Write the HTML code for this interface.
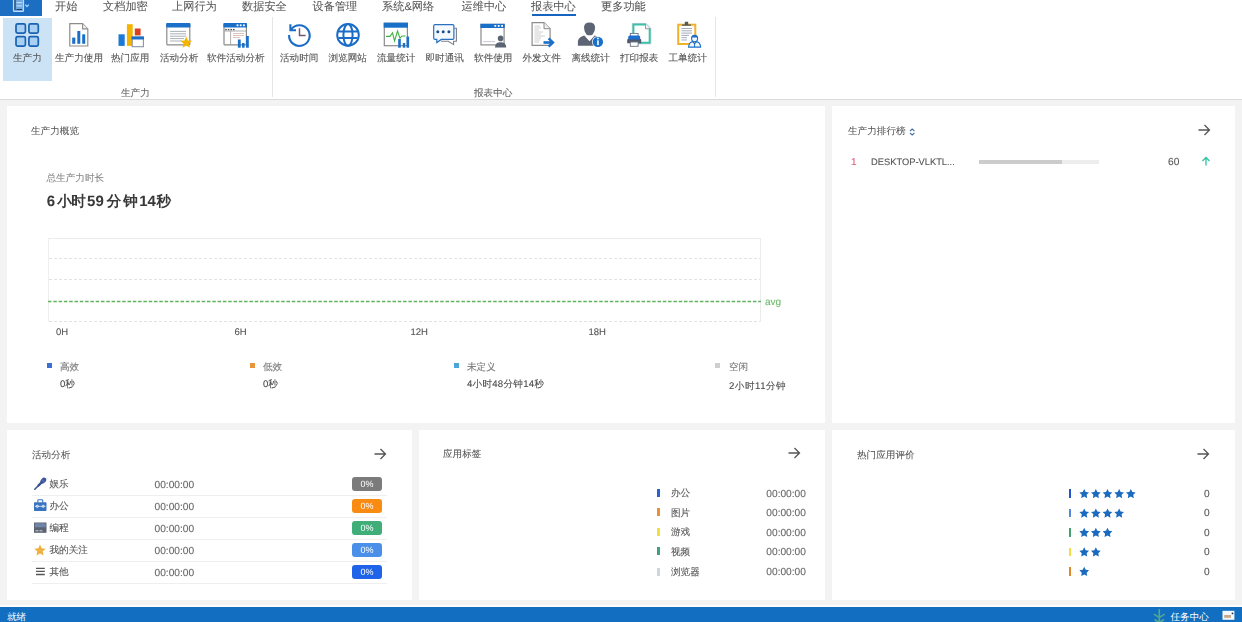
<!DOCTYPE html>
<html><head><meta charset="utf-8">
<style>
*{margin:0;padding:0;box-sizing:border-box}
html,body{width:1242px;height:622px;overflow:hidden;background:#fff;font-family:"Liberation Sans",sans-serif;color:#444;text-rendering:geometricPrecision}
.a{position:absolute;white-space:nowrap;line-height:1;-webkit-text-stroke:0.1px currentColor}
svg{position:absolute;overflow:visible}
</style></head><body>
<div style="position:absolute;left:0;top:0;width:1242px;height:622px;filter:blur(0.3px)">
<div class="a" style="left:0px;top:0px;width:42px;height:16px;background:#1b6ec2;"></div>
<svg style="left:12px;top:0" width="20" height="14" viewBox="0 0 20 14">
    <rect x="1.5" y="-1" width="10" height="12.5" rx="1" fill="#6fa6dc" stroke="#b8dcff" stroke-width="1.2"/>
    <rect x="2.4" y="0" width="1.2" height="10" fill="#1a3f6a"/>
    <rect x="4.5" y="2.2" width="5.5" height="1" fill="#cfe6ff"/>
    <rect x="4.5" y="5.4" width="5.5" height="1" fill="#cfe6ff"/>
    <rect x="4.5" y="9" width="5.5" height="1" fill="#1a3f6a"/>
    <path d="M13.3 4.6 L15 6.6 L16.8 4.6" fill="none" stroke="#a8d4ff" stroke-width="1.3"/>
</svg>
<div class="a" style="left:55px;top:2.0px;font-size:11.2px;color:#555;-webkit-text-stroke:0.05px currentColor">开始</div>
<div class="a" style="left:103px;top:2.0px;font-size:11.2px;color:#555;-webkit-text-stroke:0.05px currentColor">文档加密</div>
<div class="a" style="left:172px;top:2.0px;font-size:11.2px;color:#555;-webkit-text-stroke:0.05px currentColor">上网行为</div>
<div class="a" style="left:242px;top:2.0px;font-size:11.2px;color:#555;-webkit-text-stroke:0.05px currentColor">数据安全</div>
<div class="a" style="left:312.5px;top:2.0px;font-size:11.2px;color:#555;-webkit-text-stroke:0.05px currentColor">设备管理</div>
<div class="a" style="left:382px;top:2.0px;font-size:11.2px;color:#555;-webkit-text-stroke:0.05px currentColor">系统&amp;网络</div>
<div class="a" style="left:461.5px;top:2.0px;font-size:11.2px;color:#555;-webkit-text-stroke:0.05px currentColor">运维中心</div>
<div class="a" style="left:531px;top:2.0px;font-size:11.2px;color:#555;-webkit-text-stroke:0.05px currentColor">报表中心</div>
<div class="a" style="left:601px;top:2.0px;font-size:11.2px;color:#555;-webkit-text-stroke:0.05px currentColor">更多功能</div>
<div class="a" style="left:532px;top:14px;width:44px;height:2px;background:#1565c0;"></div>
<div class="a" style="left:3px;top:18px;width:49px;height:63px;background:#cce3f6;"></div>
  <svg style="left:0;top:0" width="1242" height="100" viewBox="0 0 1242 100">
    <!-- grid -->
    <g fill="#a9cff2" stroke="#1762b2" stroke-width="1.7">
      <rect x="16" y="23.8" width="9.4" height="9.4" rx="1.6"/>
      <rect x="28.9" y="23.8" width="9.4" height="9.4" rx="1.6"/>
      <rect x="16" y="36.7" width="9.4" height="9.4" rx="1.6"/>
      <rect x="28.9" y="36.7" width="9.4" height="9.4" rx="1.6"/>
    </g>
    <!-- doc chart -->
    <path d="M69.8 23.7 H82.6 L87.8 28.9 V46 H69.8 Z" fill="#fff" stroke="#8c8c8c" stroke-width="1.2"/>
    <path d="M82.6 23.7 V28.9 H87.8" fill="#f2f2f2" stroke="#8c8c8c" stroke-width="1.1"/>
    <g fill="#1b6fc9">
      <rect x="72.2" y="37.6" width="3.1" height="6.2"/>
      <rect x="77.3" y="31" width="3" height="12.8"/>
      <rect x="82.2" y="34.3" width="3" height="9.5"/>
    </g>
    <!-- hot apps -->
    <rect x="118.5" y="34.3" width="6.2" height="11.6" fill="#1c7ad6"/>
    <rect x="126.9" y="24.2" width="5.8" height="21.7" fill="#f4b400"/>
    <rect x="134.8" y="28.5" width="5.8" height="6.9" fill="#d9411e"/>
    <rect x="132.2" y="37.1" width="11.2" height="9.6" fill="#fff" stroke="#8a94a6" stroke-width="1.1"/>
    <rect x="131.6" y="36.5" width="12.3" height="3" fill="#1a6fc8"/>
    <!-- activity analysis -->
    <rect x="166.8" y="23.7" width="23" height="21.2" rx="1" fill="#fff" stroke="#8a8a8a" stroke-width="1.2"/>
    <rect x="166.2" y="23.1" width="24.2" height="4.4" rx="0.8" fill="#1a6fc8"/>
    <g stroke="#a0a6b0" stroke-width="0.9">
      <path d="M170 31.4 H186 M170 33.8 H186 M170 36.2 H186 M170 38.6 H184 M170 41 H182"/>
    </g>
    <path d="M186.20 36.60 L187.89 40.38 L192.00 40.81 L188.93 43.59 L189.79 47.64 L186.20 45.57 L182.61 47.64 L183.47 43.59 L180.40 40.81 L184.51 40.38 Z" fill="#f5b400"/>
    <!-- software activity analysis -->
    <rect x="224" y="23.7" width="22.4" height="21.2" rx="1" fill="#fff" stroke="#8a8a8a" stroke-width="1.2"/>
    <rect x="223.4" y="23.1" width="23.6" height="4.4" rx="0.8" fill="#1a6fc8"/>
    <g fill="#fff"><rect x="236.6" y="24.4" width="1.8" height="1.8"/><rect x="239.8" y="24.4" width="1.8" height="1.8"/><rect x="243" y="24.4" width="1.8" height="1.8"/></g>
    <g fill="#555"><circle cx="226" cy="29.6" r="0.9"/><circle cx="228.6" cy="29.6" r="0.9"/><circle cx="231.2" cy="29.6" r="0.9"/><circle cx="233.8" cy="29.6" r="0.9"/></g>
    <path d="M224 31 H246.4 M230.6 31 V45" stroke="#9a9a9a" stroke-width="0.8"/>
    <path d="M233 33.5 H244 M233 35.5 H244 M233 37.5 H240" stroke="#d8b8a8" stroke-width="0.8"/>
    <g fill="#1a6fc8">
      <rect x="237.9" y="39.5" width="2.8" height="8.2"/>
      <rect x="242" y="43" width="2.6" height="4.7"/>
      <rect x="246" y="36" width="2.8" height="11.7"/>
    </g>
    <!-- history -->
    <path d="M289.1 35 A10.3 10.3 0 1 0 291 29.6" fill="none" stroke="#1a6cc6" stroke-width="2.1"/>
    <path d="M290.4 24.2 V30.3 H296" fill="none" stroke="#1a6cc6" stroke-width="2.1"/>
    <path d="M299.5 28.2 V35.5 H305.6" fill="none" stroke="#6e5a72" stroke-width="1.5"/>
    <!-- globe -->
    <g fill="none" stroke="#1a6cc6" stroke-width="2">
      <circle cx="348" cy="34.9" r="10.8"/>
      <ellipse cx="348" cy="34.9" rx="4.6" ry="10.8"/>
      <path d="M338.5 31.4 H357.5 M338.5 38 H357.5"/>
    </g>
    <!-- traffic -->
    <rect x="384.3" y="23.3" width="23.1" height="22.4" fill="#fff" stroke="#8a8a8a" stroke-width="1.2"/>
    <rect x="383.7" y="22.7" width="24.3" height="5" fill="#1a6fc8"/>
    <path d="M386 36.4 H390 L392.5 32.8 L394.6 41 L397.5 31 L400 38.2 L402 36 H405.5" fill="none" stroke="#3fb03f" stroke-width="1.1"/>
    <g fill="#1a6fc8">
      <rect x="398.2" y="39" width="2.6" height="8.7"/>
      <rect x="402.8" y="43" width="2.4" height="4.7"/>
      <rect x="406.5" y="36.5" width="2.6" height="11.2"/>
    </g>
    <!-- chat -->
    <path d="M454.2 28.3 H456.4 V41.3 H453.6 V44.6 L448.2 41.3 H441" fill="none" stroke="#7a7f88" stroke-width="1.1"/>
    <path d="M435 24.6 H452.6 Q453.9 24.6 453.9 25.9 V38.1 Q453.9 39.4 452.6 39.4 H441.3 L436.8 42.6 V39.4 H435 Q433.7 39.4 433.7 38.1 V25.9 Q433.7 24.6 435 24.6 Z" fill="#f4f9fe" stroke="#2a6fc0" stroke-width="1.2"/>
    <g fill="#1f4f8a"><circle cx="437.8" cy="31.8" r="1.5"/><circle cx="443.2" cy="31.8" r="1.5"/><circle cx="448.9" cy="31.8" r="1.5"/></g>
    <!-- software use -->
    <rect x="481" y="24.4" width="23.1" height="20.5" fill="#fff" stroke="#8a8a8a" stroke-width="1.2"/>
    <rect x="480.4" y="23.8" width="24.3" height="4.2" fill="#1a6fc8"/>
    <g fill="#fff"><rect x="494.4" y="25" width="1.8" height="1.8"/><rect x="497.8" y="25" width="1.8" height="1.8"/><rect x="501.2" y="25" width="1.8" height="1.8"/></g>
    <path d="M483 41.6 H495" stroke="#b8bcc4" stroke-width="0.8"/>
    <circle cx="500.6" cy="38.4" r="2.8" fill="#5b6473"/>
    <path d="M495 47.6 Q495 42.2 500.6 42.2 Q506.2 42.2 506.2 47.6 Z" fill="#5b6473"/>
    <!-- outgoing file -->
    <path d="M532.1 22.6 H544 L550.1 28.7 V45.3 H532.1 Z" fill="#fff" stroke="#8c8c8c" stroke-width="1.2"/>
    <path d="M544 22.6 V28.7 H550.1" fill="#eee" stroke="#8c8c8c" stroke-width="1"/>
    <path d="M534.5 26 H540 M534.5 28 H541 M534.5 30 H539 M534.5 32 H543 M534.5 34 H541 M534.5 36 H545 M534.5 38 H541 M534.5 40 H540 M534.5 42 H539" stroke="#c8c8cc" stroke-width="0.9"/>
    <path d="M543.5 42.5 H552" stroke="#1a6fc8" stroke-width="2.6"/>
    <path d="M548.6 38.3 L553 42.5 L548.6 46.7" fill="none" stroke="#1a6fc8" stroke-width="2.4"/>
    <!-- offline -->
    <path d="M584 27.6 Q584 22.4 589.5 22.4 Q595.1 22.4 595.1 27.6 Q595.1 32 592.6 34.4 Q591.2 35.3 589.5 35.3 Q587.8 35.3 586.4 34.4 Q584 32 584 27.6 Z" fill="#5d6575"/>
    <path d="M577.9 45.8 V41.2 Q578.3 37.2 584.3 35.4 L589.5 41.2 L594.7 35.4 Q600.6 37.2 601 41.2 V45.8 Z" fill="#5d6575"/>
    <circle cx="597.9" cy="41.9" r="5.9" fill="#fff"/>
    <circle cx="597.9" cy="41.9" r="5.2" fill="#1a6fc8"/>
    <rect x="597.1" y="40.3" width="1.7" height="4.8" fill="#e8f6ff"/>
    <circle cx="597.95" cy="38.5" r="0.95" fill="#e8f6ff"/>
    <!-- print report -->
    <path d="M632.3 23.5 H646 L650.8 28.3 V43.9 H632.3 Z" fill="#f4fffc" stroke="#d8c0e0" stroke-width="0.8"/>
    <path d="M633.4 24.6 H645.5 L649.7 28.8 V42.8 H633.4 Z" fill="#fff" stroke="#3cc0a6" stroke-width="2"/>
    <path d="M645.5 23.6 V28.8 H650.6" fill="#f0f0f4" stroke="#8a90a0" stroke-width="0.9"/>
    <rect x="630.3" y="33.4" width="7.8" height="3" fill="#fff" stroke="#6a7282" stroke-width="0.9"/>
    <path d="M627.2 40 Q627.2 38.4 628.8 38.4 H639.6 Q641.2 38.4 641.2 40 V43.2 H627.2 Z" fill="#50586a"/>
    <rect x="628.2" y="35.6" width="12" height="3.9" rx="1.6" fill="#1a6fd0"/>
    <rect x="630.3" y="42" width="7.8" height="4.3" fill="#fff" stroke="#6a7282" stroke-width="0.9"/>
    <!-- work order -->
    <rect x="678.2" y="24.7" width="17.1" height="19.3" fill="#fff" stroke="#f2b12a" stroke-width="2"/>
    <path d="M682 25.8 H691 V24.4 H688.2 V21.8 H684.8 V24.4 H682 Z" fill="#505860"/>
    <path d="M681.4 28.5 H692 M681.4 30.8 H692 M681.4 33.1 H692 M681.4 35.4 H689 M681.4 37.7 H687 M681.4 40 H687" stroke="#9aa2b2" stroke-width="0.9"/>
    <path d="M688.6 47 Q688.6 42.2 692.3 41.8 M697.1 41.8 Q700.6 42.2 700.6 47 Z" fill="#fff"/>
    <path d="M688.6 47.1 Q688.8 42.3 692.6 41.6 L694.6 43.8 L696.6 41.6 Q700.4 42.3 700.6 47.1 Z" fill="#eef6ff" stroke="#1a6fc8" stroke-width="1.1"/>
    <ellipse cx="694.6" cy="38.6" rx="3" ry="3.2" fill="#eef6ff" stroke="#1a6fc8" stroke-width="1.1"/>
    <path d="M691.6 37.6 Q692 35.2 694.6 35.2 Q697.2 35.2 697.6 37.6 Z" fill="#1a6fc8"/>
    <path d="M694.6 43.8 V47" stroke="#1a6fc8" stroke-width="1"/>
  </svg>
<div class="a" style="left:272px;top:17px;width:1px;height:80px;background:#e6e6e6;"></div>
<div class="a" style="left:715px;top:17px;width:1px;height:80px;background:#e6e6e6;"></div>
<div class="a" style="left:0px;top:99px;width:1242px;height:1px;background:#dadada;"></div>
<div class="a" style="left:13px;top:53.5px;font-size:9.6px;color:#555;">生产力</div>
<div class="a" style="left:55px;top:53.5px;font-size:9.6px;color:#555;">生产力使用</div>
<div class="a" style="left:111px;top:53.5px;font-size:9.6px;color:#555;">热门应用</div>
<div class="a" style="left:160px;top:53.5px;font-size:9.6px;color:#555;">活动分析</div>
<div class="a" style="left:207px;top:53.5px;font-size:9.6px;color:#555;">软件活动分析</div>
<div class="a" style="left:280px;top:53.5px;font-size:9.6px;color:#555;">活动时间</div>
<div class="a" style="left:328.5px;top:53.5px;font-size:9.6px;color:#555;">浏览网站</div>
<div class="a" style="left:377px;top:53.5px;font-size:9.6px;color:#555;">流量统计</div>
<div class="a" style="left:425.5px;top:53.5px;font-size:9.6px;color:#555;">即时通讯</div>
<div class="a" style="left:474px;top:53.5px;font-size:9.6px;color:#555;">软件使用</div>
<div class="a" style="left:522.5px;top:53.5px;font-size:9.6px;color:#555;">外发文件</div>
<div class="a" style="left:571.5px;top:53.5px;font-size:9.6px;color:#555;">离线统计</div>
<div class="a" style="left:620px;top:53.5px;font-size:9.6px;color:#555;">打印报表</div>
<div class="a" style="left:668.5px;top:53.5px;font-size:9.6px;color:#555;">工单统计</div>
<div class="a" style="left:121px;top:88.5px;font-size:9.6px;color:#666;">生产力</div>
<div class="a" style="left:474px;top:88.5px;font-size:9.6px;color:#666;">报表中心</div>
<div class="a" style="left:0px;top:100px;width:1242px;height:506px;background:#f3f3f3;"></div>
<div class="a" style="left:7px;top:106px;width:818px;height:317px;background:#fff;"></div>
<div class="a" style="left:832px;top:106px;width:403px;height:317px;background:#fff;"></div>
<div class="a" style="left:7px;top:430px;width:405px;height:170px;background:#fff;"></div>
<div class="a" style="left:419px;top:430px;width:406px;height:170px;background:#fff;"></div>
<div class="a" style="left:832px;top:430px;width:403px;height:170px;background:#fff;"></div>
<div class="a" style="left:31px;top:127px;font-size:9.6px;color:#505050;-webkit-text-stroke:0.04px currentColor">生产力概览</div>
<div class="a" style="left:46.5px;top:174px;font-size:9.6px;color:#888;">总生产力时长</div>
<div class="a" style="left:46.7px;top:194.3px;font-size:15px;color:#383838;font-weight:bold;-webkit-text-stroke:0">6</div>
<div class="a" style="left:57.3px;top:194.8px;font-size:14.5px;color:#383838;font-weight:bold;-webkit-text-stroke:0">小</div>
<div class="a" style="left:71.2px;top:194.8px;font-size:14.5px;color:#383838;font-weight:bold;-webkit-text-stroke:0">时</div>
<div class="a" style="left:87.1px;top:194.3px;font-size:15px;color:#383838;font-weight:bold;-webkit-text-stroke:0">59</div>
<div class="a" style="left:106.7px;top:194.8px;font-size:14.5px;color:#383838;font-weight:bold;-webkit-text-stroke:0">分</div>
<div class="a" style="left:123.2px;top:194.8px;font-size:14.5px;color:#383838;font-weight:bold;-webkit-text-stroke:0">钟</div>
<div class="a" style="left:139.2px;top:194.3px;font-size:15px;color:#383838;font-weight:bold;-webkit-text-stroke:0">14</div>
<div class="a" style="left:156.6px;top:194.8px;font-size:14.5px;color:#383838;font-weight:bold;-webkit-text-stroke:0">秒</div>
<div class="a" style="left:48px;top:238px;width:713px;height:1px;background:#ececec;"></div>
<div class="a" style="left:48px;top:238px;width:1px;height:84px;background:#efefef;"></div>
<div class="a" style="left:760px;top:238px;width:1px;height:84px;background:#ececec;"></div>
<svg style="left:0;top:0" width="1242" height="622">
<path d="M49 258.5 H760 M49 279.5 H760 M49 321.5 H760" stroke="#e2e2e2" stroke-width="1" stroke-dasharray="3 2"/>
<line x1="48" y1="301.5" x2="761" y2="301.5" stroke="#5fb35f" stroke-width="1.3" stroke-dasharray="3.5 1.8"/>
</svg>
<div class="a" style="left:765px;top:297.5px;font-size:10px;color:#6cbb6c;">avg</div>
<div class="a" style="left:56px;top:328px;font-size:9.5px;color:#555;">0H</div>
<div class="a" style="left:234.5px;top:328px;font-size:9.5px;color:#555;">6H</div>
<div class="a" style="left:410.5px;top:328px;font-size:9.5px;color:#555;">12H</div>
<div class="a" style="left:588.5px;top:328px;font-size:9.5px;color:#555;">18H</div>
<div class="a" style="left:47px;top:363px;width:5px;height:5px;background:#3b6fd6;"></div>
<div class="a" style="left:60px;top:363px;font-size:9.6px;color:#777;">高效</div>
<div class="a" style="left:60px;top:380px;font-size:9.6px;color:#484848;letter-spacing:0px;-webkit-text-stroke:0.08px currentColor">0秒</div>
<div class="a" style="left:250px;top:363px;width:5px;height:5px;background:#e8943c;"></div>
<div class="a" style="left:263px;top:363px;font-size:9.6px;color:#777;">低效</div>
<div class="a" style="left:263px;top:380px;font-size:9.6px;color:#484848;letter-spacing:0px;-webkit-text-stroke:0.08px currentColor">0秒</div>
<div class="a" style="left:454px;top:363px;width:5px;height:5px;background:#4aa6d6;"></div>
<div class="a" style="left:467px;top:363px;font-size:9.6px;color:#777;">未定义</div>
<div class="a" style="left:467px;top:380px;font-size:9.6px;color:#484848;letter-spacing:0.25px;-webkit-text-stroke:0.08px currentColor">4小时48分钟14秒</div>
<div class="a" style="left:715px;top:363px;width:5px;height:5px;background:#cfcfcf;"></div>
<div class="a" style="left:729px;top:363px;font-size:9.6px;color:#777;">空闲</div>
<div class="a" style="left:729px;top:381.5px;font-size:9.6px;color:#484848;letter-spacing:0.5px;-webkit-text-stroke:0.08px currentColor">2小时11分钟</div>
<div class="a" style="left:848px;top:127px;font-size:9.6px;color:#505050;-webkit-text-stroke:0.04px currentColor">生产力排行榜</div>
<svg style="left:909px;top:128px" width="7" height="8"><path d="M1 3 L3.2 1 L5.4 3 M1 5 L3.2 7 L5.4 5" fill="none" stroke="#4a6fa5" stroke-width="1.1"/></svg>
<svg style="left:1198px;top:124px" width="13" height="12"><path d="M0.5 6 H11.5 M6.5 1 L11.5 6 L6.5 11" fill="none" stroke="#555" stroke-width="1.3"/></svg>
<div class="a" style="left:851px;top:158px;font-size:10px;color:#d9607a;">1</div>
<div class="a" style="left:871px;top:158px;font-size:9.33px;color:#555;">DESKTOP-VLKTL...</div>
<div class="a" style="left:978.5px;top:160px;width:120px;height:3.5px;background:#ededed;"></div>
<div class="a" style="left:978.5px;top:160px;width:83px;height:3.5px;background:#cccccc;"></div>
<div class="a" style="left:1168px;top:158px;font-size:10.2px;color:#555;">60</div>
<svg style="left:1201px;top:156px" width="10" height="10"><path d="M5 9.5 V1.5 M1.5 5 L5 1.5 L8.5 5" fill="none" stroke="#2ec4a0" stroke-width="1.3"/></svg>
<div class="a" style="left:32px;top:451px;font-size:9.6px;color:#505050;-webkit-text-stroke:0.04px currentColor">活动分析</div>
<svg style="left:374px;top:448px" width="13" height="12"><path d="M0.5 6 H11.5 M6.5 1 L11.5 6 L6.5 11" fill="none" stroke="#555" stroke-width="1.3"/></svg>
<div class="a" style="left:443px;top:450px;font-size:9.6px;color:#505050;-webkit-text-stroke:0.04px currentColor">应用标签</div>
<svg style="left:788px;top:447px" width="13" height="12"><path d="M0.5 6 H11.5 M6.5 1 L11.5 6 L6.5 11" fill="none" stroke="#555" stroke-width="1.3"/></svg>
<div class="a" style="left:857px;top:451px;font-size:9.6px;color:#505050;-webkit-text-stroke:0.04px currentColor">热门应用评价</div>
<svg style="left:1197px;top:448px" width="13" height="12"><path d="M0.5 6 H11.5 M6.5 1 L11.5 6 L6.5 11" fill="none" stroke="#555" stroke-width="1.3"/></svg>
<div class="a" style="left:49.5px;top:479.9px;font-size:9.6px;color:#555;">娱乐</div>
<div class="a" style="left:154.5px;top:480.8px;font-size:10.2px;color:#666;">00:00:00</div>
<div class="a" style="left:352px;top:476.6px;width:30px;height:14px;border-radius:3px;background:#7b7b7b;color:#fff;font-size:9px;text-align:center;line-height:14px;-webkit-text-stroke:0">0%</div>
<div class="a" style="left:31.5px;top:494.5px;width:355px;height:1px;background:#efefef;"></div>
<div class="a" style="left:49.5px;top:501.9px;font-size:9.6px;color:#555;">办公</div>
<div class="a" style="left:154.5px;top:502.8px;font-size:10.2px;color:#666;">00:00:00</div>
<div class="a" style="left:352px;top:498.6px;width:30px;height:14px;border-radius:3px;background:#f98a12;color:#fff;font-size:9px;text-align:center;line-height:14px;-webkit-text-stroke:0">0%</div>
<div class="a" style="left:31.5px;top:516.5px;width:355px;height:1px;background:#efefef;"></div>
<div class="a" style="left:49.5px;top:523.9px;font-size:9.6px;color:#555;">编程</div>
<div class="a" style="left:154.5px;top:524.8px;font-size:10.2px;color:#666;">00:00:00</div>
<div class="a" style="left:352px;top:520.6px;width:30px;height:14px;border-radius:3px;background:#3fae78;color:#fff;font-size:9px;text-align:center;line-height:14px;-webkit-text-stroke:0">0%</div>
<div class="a" style="left:31.5px;top:538.5px;width:355px;height:1px;background:#efefef;"></div>
<div class="a" style="left:49.5px;top:545.9px;font-size:9.6px;color:#555;">我的关注</div>
<div class="a" style="left:154.5px;top:546.8px;font-size:10.2px;color:#666;">00:00:00</div>
<div class="a" style="left:352px;top:542.6px;width:30px;height:14px;border-radius:3px;background:#4a90e8;color:#fff;font-size:9px;text-align:center;line-height:14px;-webkit-text-stroke:0">0%</div>
<div class="a" style="left:31.5px;top:560.5px;width:355px;height:1px;background:#efefef;"></div>
<div class="a" style="left:49.5px;top:567.9px;font-size:9.6px;color:#555;">其他</div>
<div class="a" style="left:154.5px;top:568.8px;font-size:10.2px;color:#666;">00:00:00</div>
<div class="a" style="left:352px;top:564.6px;width:30px;height:14px;border-radius:3px;background:#1e63e8;color:#fff;font-size:9px;text-align:center;line-height:14px;-webkit-text-stroke:0">0%</div>
<div class="a" style="left:31.5px;top:582.5px;width:355px;height:1px;background:#efefef;"></div>
<svg style="left:0;top:0" width="1242" height="622">
  <path d="M34.8 489.2 L41 483" stroke="#3a5598" stroke-width="1.6" stroke-linecap="round"/>
  <path d="M38.6 485.4 L41 483" stroke="#3a5598" stroke-width="2.4" stroke-linecap="round"/>
  <ellipse cx="43.3" cy="480.6" rx="3.3" ry="2.4" transform="rotate(-45 43.3 480.6)" fill="#3a5598"/>
  <path d="M42 479.6 L44.4 482" stroke="#8aa0d0" stroke-width="0.7"/>
  <rect x="34" y="502.2" width="12.5" height="8.8" rx="0.8" fill="#3a74c0"/>
  <path d="M37.8 502.6 V500.6 Q37.8 499.8 38.6 499.8 H41.9 Q42.7 499.8 42.7 500.6 V502.6" fill="none" stroke="#3a74c0" stroke-width="1.1"/>
  <path d="M35 506.3 H45.5" stroke="#d8e8f8" stroke-width="0.8"/>
  <circle cx="37.3" cy="506.3" r="1.1" fill="none" stroke="#fff" stroke-width="0.8"/>
  <circle cx="43.2" cy="506.3" r="1.1" fill="none" stroke="#fff" stroke-width="0.8"/>
  <rect x="34" y="522.5" width="12.5" height="10.3" fill="#5b6270"/>
  <rect x="34.8" y="523.3" width="10.9" height="4" fill="#6f86a8"/>
  <path d="M35.5 530.8 H38.5 M39.5 530.8 H42.5" stroke="#d0d4da" stroke-width="1"/>
  <path d="M40 544.6 L41.65 548.33 L45.71 548.75 L42.67 551.47 L43.53 555.46 L40 553.4 L36.47 555.46 L37.33 551.47 L34.29 548.75 L38.35 548.33 Z" fill="#f0b040"/>
  <path d="M36 568.3 H44.8 M36 571.4 H44.8 M36 574.5 H44.8" stroke="#555" stroke-width="1.3"/>
</svg>

<div class="a" style="left:657px;top:488.9px;width:2.7px;height:8px;background:#2860d8;"></div>
<div class="a" style="left:671px;top:489.2px;font-size:9.6px;color:#555;">办公</div>
<div class="a" style="left:766.3px;top:489.5px;font-size:10.2px;color:#666;">00:00:00</div>
<div class="a" style="left:657px;top:508.4px;width:2.7px;height:8px;background:#e89038;"></div>
<div class="a" style="left:671px;top:508.7px;font-size:9.6px;color:#555;">图片</div>
<div class="a" style="left:766.3px;top:509.0px;font-size:10.2px;color:#666;">00:00:00</div>
<div class="a" style="left:657px;top:527.9px;width:2.7px;height:8px;background:#f0e040;"></div>
<div class="a" style="left:671px;top:528.2px;font-size:9.6px;color:#555;">游戏</div>
<div class="a" style="left:766.3px;top:528.5px;font-size:10.2px;color:#666;">00:00:00</div>
<div class="a" style="left:657px;top:547.4px;width:2.7px;height:8px;background:#40a080;"></div>
<div class="a" style="left:671px;top:547.7px;font-size:9.6px;color:#555;">视频</div>
<div class="a" style="left:766.3px;top:548.0px;font-size:10.2px;color:#666;">00:00:00</div>
<div class="a" style="left:657px;top:567.5px;width:2.7px;height:8px;background:#d0d4dc;"></div>
<div class="a" style="left:671px;top:567.8px;font-size:9.6px;color:#555;">浏览器</div>
<div class="a" style="left:766.3px;top:568.1px;font-size:10.2px;color:#666;">00:00:00</div>
<svg style="left:0;top:0" width="1242" height="622"><g fill="#1a6abf">
<path d="M1084.20 488.90 L1085.70 491.94 L1089.05 492.42 L1086.63 494.79 L1087.20 498.13 L1084.20 496.55 L1081.20 498.13 L1081.77 494.79 L1079.35 492.42 L1082.70 491.94 Z"/>
<path d="M1095.85 488.90 L1097.35 491.94 L1100.70 492.42 L1098.28 494.79 L1098.85 498.13 L1095.85 496.55 L1092.85 498.13 L1093.42 494.79 L1091.00 492.42 L1094.35 491.94 Z"/>
<path d="M1107.50 488.90 L1109.00 491.94 L1112.35 492.42 L1109.93 494.79 L1110.50 498.13 L1107.50 496.55 L1104.50 498.13 L1105.07 494.79 L1102.65 492.42 L1106.00 491.94 Z"/>
<path d="M1119.15 488.90 L1120.65 491.94 L1124.00 492.42 L1121.58 494.79 L1122.15 498.13 L1119.15 496.55 L1116.15 498.13 L1116.72 494.79 L1114.30 492.42 L1117.65 491.94 Z"/>
<path d="M1130.80 488.90 L1132.30 491.94 L1135.65 492.42 L1133.23 494.79 L1133.80 498.13 L1130.80 496.55 L1127.80 498.13 L1128.37 494.79 L1125.95 492.42 L1129.30 491.94 Z"/>
<path d="M1084.20 508.40 L1085.70 511.44 L1089.05 511.92 L1086.63 514.29 L1087.20 517.63 L1084.20 516.05 L1081.20 517.63 L1081.77 514.29 L1079.35 511.92 L1082.70 511.44 Z"/>
<path d="M1095.85 508.40 L1097.35 511.44 L1100.70 511.92 L1098.28 514.29 L1098.85 517.63 L1095.85 516.05 L1092.85 517.63 L1093.42 514.29 L1091.00 511.92 L1094.35 511.44 Z"/>
<path d="M1107.50 508.40 L1109.00 511.44 L1112.35 511.92 L1109.93 514.29 L1110.50 517.63 L1107.50 516.05 L1104.50 517.63 L1105.07 514.29 L1102.65 511.92 L1106.00 511.44 Z"/>
<path d="M1119.15 508.40 L1120.65 511.44 L1124.00 511.92 L1121.58 514.29 L1122.15 517.63 L1119.15 516.05 L1116.15 517.63 L1116.72 514.29 L1114.30 511.92 L1117.65 511.44 Z"/>
<path d="M1084.20 527.80 L1085.70 530.84 L1089.05 531.32 L1086.63 533.69 L1087.20 537.03 L1084.20 535.45 L1081.20 537.03 L1081.77 533.69 L1079.35 531.32 L1082.70 530.84 Z"/>
<path d="M1095.85 527.80 L1097.35 530.84 L1100.70 531.32 L1098.28 533.69 L1098.85 537.03 L1095.85 535.45 L1092.85 537.03 L1093.42 533.69 L1091.00 531.32 L1094.35 530.84 Z"/>
<path d="M1107.50 527.80 L1109.00 530.84 L1112.35 531.32 L1109.93 533.69 L1110.50 537.03 L1107.50 535.45 L1104.50 537.03 L1105.07 533.69 L1102.65 531.32 L1106.00 530.84 Z"/>
<path d="M1084.20 547.30 L1085.70 550.34 L1089.05 550.82 L1086.63 553.19 L1087.20 556.53 L1084.20 554.95 L1081.20 556.53 L1081.77 553.19 L1079.35 550.82 L1082.70 550.34 Z"/>
<path d="M1095.85 547.30 L1097.35 550.34 L1100.70 550.82 L1098.28 553.19 L1098.85 556.53 L1095.85 554.95 L1092.85 556.53 L1093.42 553.19 L1091.00 550.82 L1094.35 550.34 Z"/>
<path d="M1084.20 566.80 L1085.70 569.84 L1089.05 570.32 L1086.63 572.69 L1087.20 576.03 L1084.20 574.45 L1081.20 576.03 L1081.77 572.69 L1079.35 570.32 L1082.70 569.84 Z"/>
</g></svg>
<div class="a" style="left:1068.7px;top:489.3px;width:2.6px;height:8.6px;background:#2255cc;"></div>
<div class="a" style="left:1204px;top:489.9px;font-size:10.2px;color:#555;">0</div>
<div class="a" style="left:1068.7px;top:508.8px;width:2.6px;height:8.6px;background:#5588dd;"></div>
<div class="a" style="left:1204px;top:509.4px;font-size:10.2px;color:#555;">0</div>
<div class="a" style="left:1068.7px;top:528.2px;width:2.6px;height:8.6px;background:#40a070;"></div>
<div class="a" style="left:1204px;top:528.8px;font-size:10.2px;color:#555;">0</div>
<div class="a" style="left:1068.7px;top:547.7px;width:2.6px;height:8.6px;background:#f0e040;"></div>
<div class="a" style="left:1204px;top:548.3px;font-size:10.2px;color:#555;">0</div>
<div class="a" style="left:1068.7px;top:567.2px;width:2.6px;height:8.6px;background:#e08830;"></div>
<div class="a" style="left:1204px;top:567.8px;font-size:10.2px;color:#555;">0</div>
<div class="a" style="left:0px;top:605px;width:1242px;height:1.5px;background:#fbfbfb;"></div>
<div class="a" style="left:0px;top:606.5px;width:1242px;height:16px;background:#126ec0;"></div>
<div class="a" style="left:7px;top:612.5px;font-size:9.6px;color:#fff;-webkit-text-stroke:0">就绪</div>
<div class="a" style="left:1170.5px;top:612.5px;font-size:9.6px;color:#fff;-webkit-text-stroke:0">任务中心</div>
<svg style="left:0;top:0" width="1242" height="622">
  <path d="M1159.3 609 V622 M1154 614.2 L1159.3 617.6 L1164.6 614.2 M1154.5 619.5 L1159.3 622.5 L1164.1 619.5" fill="none" stroke="#52a88e" stroke-width="1.6"/>
  <rect x="1222.5" y="610.8" width="11.9" height="9" fill="#f4f8fc"/>
  <rect x="1224.2" y="615" width="6.8" height="2.8" fill="#c8a888"/>
  <circle cx="1232.5" cy="613.4" r="0.9" fill="#1a3050"/>
</svg>
</div>
</body></html>
